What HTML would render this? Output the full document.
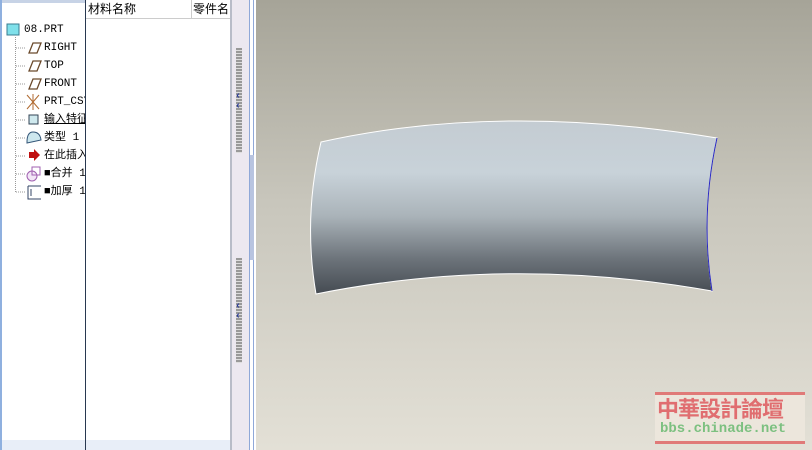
<!DOCTYPE html>
<html><head><meta charset="utf-8"><style>
body{margin:0;width:812px;height:450px;overflow:hidden;position:relative;font-family:"Liberation Mono","Noto Sans CJK SC",monospace;font-size:11px;background:#fff}
.abs{position:absolute}
.row{position:absolute;left:44px;height:16px;line-height:16px;white-space:nowrap;color:#000}
</style></head><body>
<div class="abs" style="left:0;top:0;width:85px;height:450px;background:#fff;overflow:hidden">
 <div class="abs" style="left:0;top:0;width:85px;height:3px;background:#c7d3e6"></div>
 <div class="abs" style="left:0;top:0;width:2px;height:450px;background:#8fb0df"></div>
 <div class="abs" style="left:15px;top:37px;width:1px;height:155px;border-left:1px dotted #999"></div>
 <svg class="abs" style="left:0;top:0" width="85" height="210">
  <rect x="7" y="24" width="12" height="11" fill="#7fe0ea" stroke="#3a7c90"/>
  <g stroke="#999" stroke-dasharray="1,1"><line x1="16" y1="48" x2="26" y2="48"/><line x1="16" y1="66" x2="26" y2="66"/><line x1="16" y1="84" x2="26" y2="84"/><line x1="16" y1="102" x2="26" y2="102"/><line x1="16" y1="120" x2="26" y2="120"/><line x1="16" y1="138" x2="26" y2="138"/><line x1="16" y1="156" x2="26" y2="156"/><line x1="16" y1="174" x2="26" y2="174"/><line x1="16" y1="192" x2="26" y2="192"/></g>
  <g fill="none" stroke="#6b4a2c" stroke-width="1.3"><path d="M29 53 L33 43 L41 43 L37 53Z"/><path d="M29 71 L33 61 L41 61 L37 71Z"/><path d="M29 89 L33 79 L41 79 L37 89Z"/></g>
  <g stroke="#b06a30"><line x1="27" y1="95" x2="39" y2="109"/><line x1="27" y1="109" x2="39" y2="95"/><line x1="33" y1="94" x2="33" y2="110"/></g>
  <rect x="29" y="115" width="9" height="9" fill="#cfe9ee" stroke="#345"/>
  <path d="M27 142 Q27 132 33 132 Q40 132 41 140 L27 143Z" fill="#cde7ee" stroke="#357"/>
  <path d="M29 152 h5 v-3 l6 6 -6 6 v-3 h-5z" fill="#c01010"/>
  <circle cx="32" cy="176" r="5" fill="#f2e6f6" stroke="#a060b0"/><rect x="32" y="167" width="8" height="8" fill="none" stroke="#a060b0"/>
  <path d="M28 186 h13 M28 186 v13 h13 M31 189 v7" fill="none" stroke="#346"/>
 </svg>
 <div class="row" style="left:24px;top:22px">08.PRT</div>
 <div class="row" style="top:40px">RIGHT</div>
 <div class="row" style="top:58px">TOP</div>
 <div class="row" style="top:76px">FRONT</div>
 <div class="row" style="top:94px">PRT_CSYS</div>
 <div class="row" style="top:112px;text-decoration:underline">输入特征</div>
 <div class="row" style="top:130px">类型 1</div>
 <div class="row" style="top:148px">在此插入</div>
 <div class="row" style="top:166px">■合并 1</div>
 <div class="row" style="top:184px">■加厚 1</div>
 <div class="abs" style="left:2px;top:440px;width:83px;height:10px;background:#e8eef8"></div>
</div>
<div class="abs" style="left:85px;top:0;width:1px;height:450px;background:#283850"></div>
<div class="abs" style="left:86px;top:0;width:145px;height:450px;background:#fff;overflow:hidden">
 <div class="abs" style="left:0;top:0;width:145px;height:18px;border-bottom:1px solid #ccc"></div>
 <div class="abs" style="left:2px;top:2px;font-size:12px;font-family:'Noto Sans CJK SC',sans-serif;line-height:14px">材料名称</div>
 <div class="abs" style="left:105px;top:0;width:1px;height:18px;background:#ccc"></div>
 <div class="abs" style="left:107px;top:2px;font-size:12px;font-family:'Noto Sans CJK SC',sans-serif;line-height:14px">零件名</div>
 <div class="abs" style="left:0;top:440px;width:145px;height:10px;background:#e8eef8"></div>
</div>
<div class="abs" style="left:230px;top:0;width:2px;height:450px;background:#b8bcc8"></div>
<div class="abs" style="left:232px;top:0;width:18px;height:450px;background:#ece8f0"></div>
<div class="abs" style="left:236px;top:48px;width:6px;height:105px;background:repeating-linear-gradient(#999 0 2px,#ddd 2px 3px)"></div>
<div class="abs" style="left:236px;top:258px;width:6px;height:105px;background:repeating-linear-gradient(#999 0 2px,#ddd 2px 3px)"></div>
<div class="abs" style="left:235px;top:92px;color:#22339a;font-size:10px;line-height:10px;font-weight:bold">‹<br>‹</div>
<div class="abs" style="left:235px;top:302px;color:#22339a;font-size:10px;line-height:10px;font-weight:bold">‹<br>‹</div>
<div class="abs" style="left:249px;top:0;width:1px;height:450px;background:#8fa8d8"></div>
<div class="abs" style="left:253px;top:0;width:1px;height:450px;background:#8fa8d8"></div>
<div class="abs" style="left:250px;top:155px;width:4px;height:105px;background:#b8c4e0"></div>
<div class="abs" style="left:256px;top:0;width:556px;height:450px;background:linear-gradient(#a6a498,#c8c6bc 45%,#e3e0d6)"></div>
<svg class="abs" style="left:0;top:0" width="812" height="450">
 <defs><linearGradient id="g" x1="0" y1="0" x2="0" y2="1">
  <stop offset="0" stop-color="#c4ccd2"/><stop offset="0.3" stop-color="#c8d2d9"/><stop offset="0.55" stop-color="#aab3b9"/><stop offset="0.8" stop-color="#6c737a"/><stop offset="1" stop-color="#454b52"/></linearGradient></defs>
 <path d="M321 142 Q500 102 717 138 Q700 215 712 291 Q510 255 316 294 Q303 218 321 142Z" fill="url(#g)" stroke="#fff" stroke-width="1"/>
 <path d="M717 138 Q700 215 712 291" fill="none" stroke="#2828c0" stroke-width="1"/>
</svg>
<div class="abs" style="left:655px;top:392px;width:150px;height:46px;background:#ece6dc;border-top:3px solid #e07a78;border-bottom:3px solid #e07a78"></div>
<div class="abs" style="left:657px;top:395px;font-family:'Noto Sans CJK SC',sans-serif;font-weight:bold;font-size:22px;line-height:26px;color:#e06e70;letter-spacing:-1px">中華設計論壇</div>
<div class="abs" style="left:660px;top:421px;font-family:'Liberation Mono',monospace;font-weight:bold;font-size:14px;line-height:16px;color:#7cc080">bbs.chinade.net</div>
</body></html>
